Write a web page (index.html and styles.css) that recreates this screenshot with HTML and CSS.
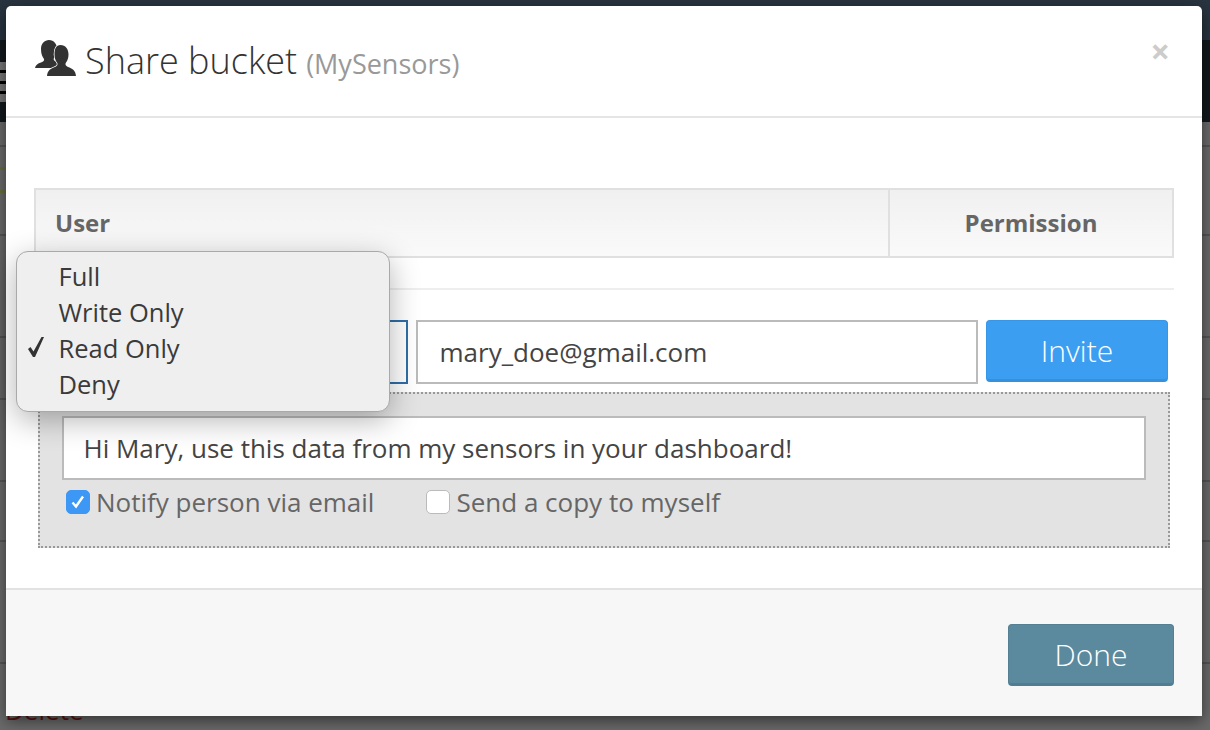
FILE: index.html

```html
<!DOCTYPE html>
<html lang="en">
<head>
    <meta charset="UTF-8">
    <title>Share bucket</title>
    <link rel="stylesheet" href="styles.css">
</head>
<body>
    <div class="backdrop">
        <div class="topbar"></div>
        <div class="subbar">
            <div class="burger"><span></span><span></span><span></span></div>
        </div>
        <div class="row row-a"></div>
        <div class="row row-b"><span class="mark"></span></div>
        <div class="row row-c"></div>
        <div class="row row-d"></div>
        <div class="row row-e"></div>
        <div class="row row-f"></div>
        <div class="row row-g"></div>
        <div class="behind-delete">Delete</div>
    </div>

    <div class="modal">
        <div class="modal-header">
            <h3>
                <svg class="share-icon" width="41" height="37" viewBox="0 0 41 37">
                    <path fill="#333" d="M14 0c5 0 8 4 8 9 0 4-1.500 7-3 9-1 1.500 0 3 3 4v6H0c.5-3 3-4.500 6-5.500 2.500-.8 3.500-2 3-3.500-1.500-2-3-5-3-10C6 3.500 9.500 0 14 0z"/>
                    <path fill="#333" stroke="#fff" stroke-width="1.600" paint-order="stroke" d="M25.500 5c5 0 8 4 8 9.500 0 3.500-1 6-2.500 8-1.200 1.700-.5 3.500 2 4.500 4 1.500 7.500 3 8 9H12c.5-6 4-7.500 8-9 2.500-1 3.200-2.800 2-4.500-1.500-2-2.500-4.500-2.500-8C19.500 9 21 5 25.500 5z"/>
                </svg>
                <span>Share bucket</span>
                <small>(MySensors)</small>
            </h3>
            <span class="close">&times;</span>
        </div>

        <div class="modal-body">
            <table class="users">
                <tr>
                    <th class="col-user">User</th>
                    <th class="col-perm">Permission</th>
                </tr>
            </table>
            <hr>
            <div class="invite-row">
                <div class="select-box"></div>
                <div class="field email">mary_doe@gmail.com</div>
                <button class="btn btn-invite">Invite</button>
            </div>
            <div class="message-panel">
                <div class="field message">Hi Mary, use this data from my sensors in your dashboard!</div>
                <div class="options">
                    <label class="option">
                        <span class="check checked">
                            <svg width="16" height="16" viewBox="0 0 16 16"><path d="M2.500 8.500l3.500 4 7-10" fill="none" stroke="#fff" stroke-width="2.400"/></svg>
                        </span>
                        Notify person via email
                    </label>
                    <label class="option">
                        <span class="check"></span>
                        Send a copy to myself
                    </label>
                </div>
            </div>
        </div>

        <div class="modal-footer">
            <button class="btn btn-done">Done</button>
        </div>

        <ul class="dropdown">
            <li>Full</li>
            <li>Write Only</li>
            <li class="selected">
                <svg class="tick" width="16" height="20" viewBox="0 0 16 20"><path fill="#333" d="M0 12l2.500-2 3 4.500L13.500 0H16L7 20H5z"/></svg>
                Read Only
            </li>
            <li>Deny</li>
        </ul>
    </div>
</body>
</html>
```

FILE: styles.css

```css
body { margin: 0; padding: 6px 8px 14px 6px; box-sizing: border-box; height: 730px; overflow: hidden; background: #6a6a6a; font-family: "Open Sans", Arial, sans-serif; color: #333; }

/* page dimmed behind the modal */
.backdrop { position: absolute; inset: 0; z-index: 0; }
.topbar { height: 40px; background: #28343f; }
.subbar { height: 82px; background: #12181c; }
.burger { width: 6px; height: 40px; padding-top: 22px; }
.burger { background-clip: content-box; background-color: #777; display: flex; flex-direction: column; justify-content: space-evenly; }
.burger span { height: 3px; background: #000; }
.row { border-bottom: 2px solid #555; box-sizing: border-box; }
.row-a { height: 25px; }
.row-b { height: 69px; }
.mark { display: block; width: 6px; height: 26px; margin-top: 20px; border-top: 3px solid #66703a; border-bottom: 3px solid #66703a; box-sizing: border-box; }
.row-c { height: 102px; }
.row-d { height: 62px; }
.row-e { height: 82px; }
.row-f { height: 60px; }
.row-g { height: 122px; }
.behind-delete { position: absolute; left: 5px; top: 692px; font-size: 26px; color: #5e1410; }

.modal { position: relative; z-index: 1; width: 1196px; height: 710px; display: flex; flex-direction: column; background: #fff; border-radius: 5px 5px 0 0; box-shadow: 0 5px 15px rgba(0,0,0,0.5); }

.modal-header { height: 110px; flex: none; display: flex; justify-content: space-between; border-bottom: 2px solid #e5e5e5; padding: 0 32px 0 29px; }
.modal-header h3 { margin: 30px 0 0; display: flex; align-items: baseline; gap: 9px; height: 50px; font-size: 36px; font-weight: 300; color: #333; }
.modal-header small { font-size: 27px; font-weight: 400; color: #999; }
.share-icon { align-self: flex-start; margin-top: 4px; }
.close { font-size: 34px; font-weight: 700; color: #ccc; line-height: 1; margin-top: 28px; }

.modal-body { flex: 1; padding: 70px 28px 0; }
.users { width: 100%; height: 70px; border-collapse: collapse; border: 2px solid #e0e0e0; background: linear-gradient(#f0f0f0, #fafafa); }
.users th { font-size: 24px; color: #666; padding: 0 0 2px; }
.users .col-user { text-align: left; padding-left: 19px; }
.col-perm { width: 282px; border-left: 2px solid #e0e0e0; }
hr { border: 0; border-top: 2px solid #eee; margin: 30px 0 30px; }

.invite-row { display: flex; gap: 8px; padding-left: 4px; align-items: flex-start; }
.select-box { width: 370px; height: 64px; box-sizing: border-box; border: 2px solid #2f6ea8; }
.field { box-sizing: border-box; height: 64px; border: 2px solid #bbb; background: #fff; padding: 0 19.500px; display: flex; align-items: center; font-size: 26px; color: #444; }
.email { width: 562px; padding-left: 21.500px; }
.btn { box-sizing: border-box; border: 1px solid transparent; color: #fff; font-family: inherit; font-weight: 300; font-size: 30px; border-radius: 4px; }
.btn-invite { width: 182px; height: 62px; background: #3c9ef1; border-color: #3896e6; border-bottom: 3px solid #3690dc; }

.message-panel { box-sizing: border-box; margin: 8px 4px 0; height: 156px; border: 2px dotted #999; background: #e3e3e3; padding: 22px; }
.options { display: flex; gap: 52px; margin-top: 4px; padding-left: 4px; }
.option { display: flex; align-items: center; gap: 6px; font-size: 26px; color: #666; }
.check { box-sizing: border-box; width: 24px; height: 24px; border-radius: 5px; background: #fff; border: 1px solid #bbb; display: flex; align-items: center; justify-content: center; }
.check.checked { background: #3d97f5; border-color: #3d97f5; }

.modal-footer { flex: none; height: 128px; box-sizing: border-box; border-top: 2px solid #e2e2e2; background: #f7f7f7; display: flex; justify-content: flex-end; padding: 34px 28px 0; }
.btn-done { width: 166px; height: 62px; background: #5b8a9f; border-color: #557f93; border-bottom: 3px solid #517d90; }

.dropdown { position: absolute; left: 10px; top: 245px; width: 374px; height: 161px; box-sizing: border-box; margin: 0; padding: 6px 0; list-style: none; background: #efefef; border: 1px solid #a9a9a9; border-radius: 12px; box-shadow: 0 8px 30px rgba(0,0,0,0.3); }
.dropdown li { height: 36px; line-height: 36px; padding-left: 41.500px; font-size: 25.500px; color: #3a3a3a; position: relative; }
.tick { position: absolute; left: 11px; top: 7px; }
```
